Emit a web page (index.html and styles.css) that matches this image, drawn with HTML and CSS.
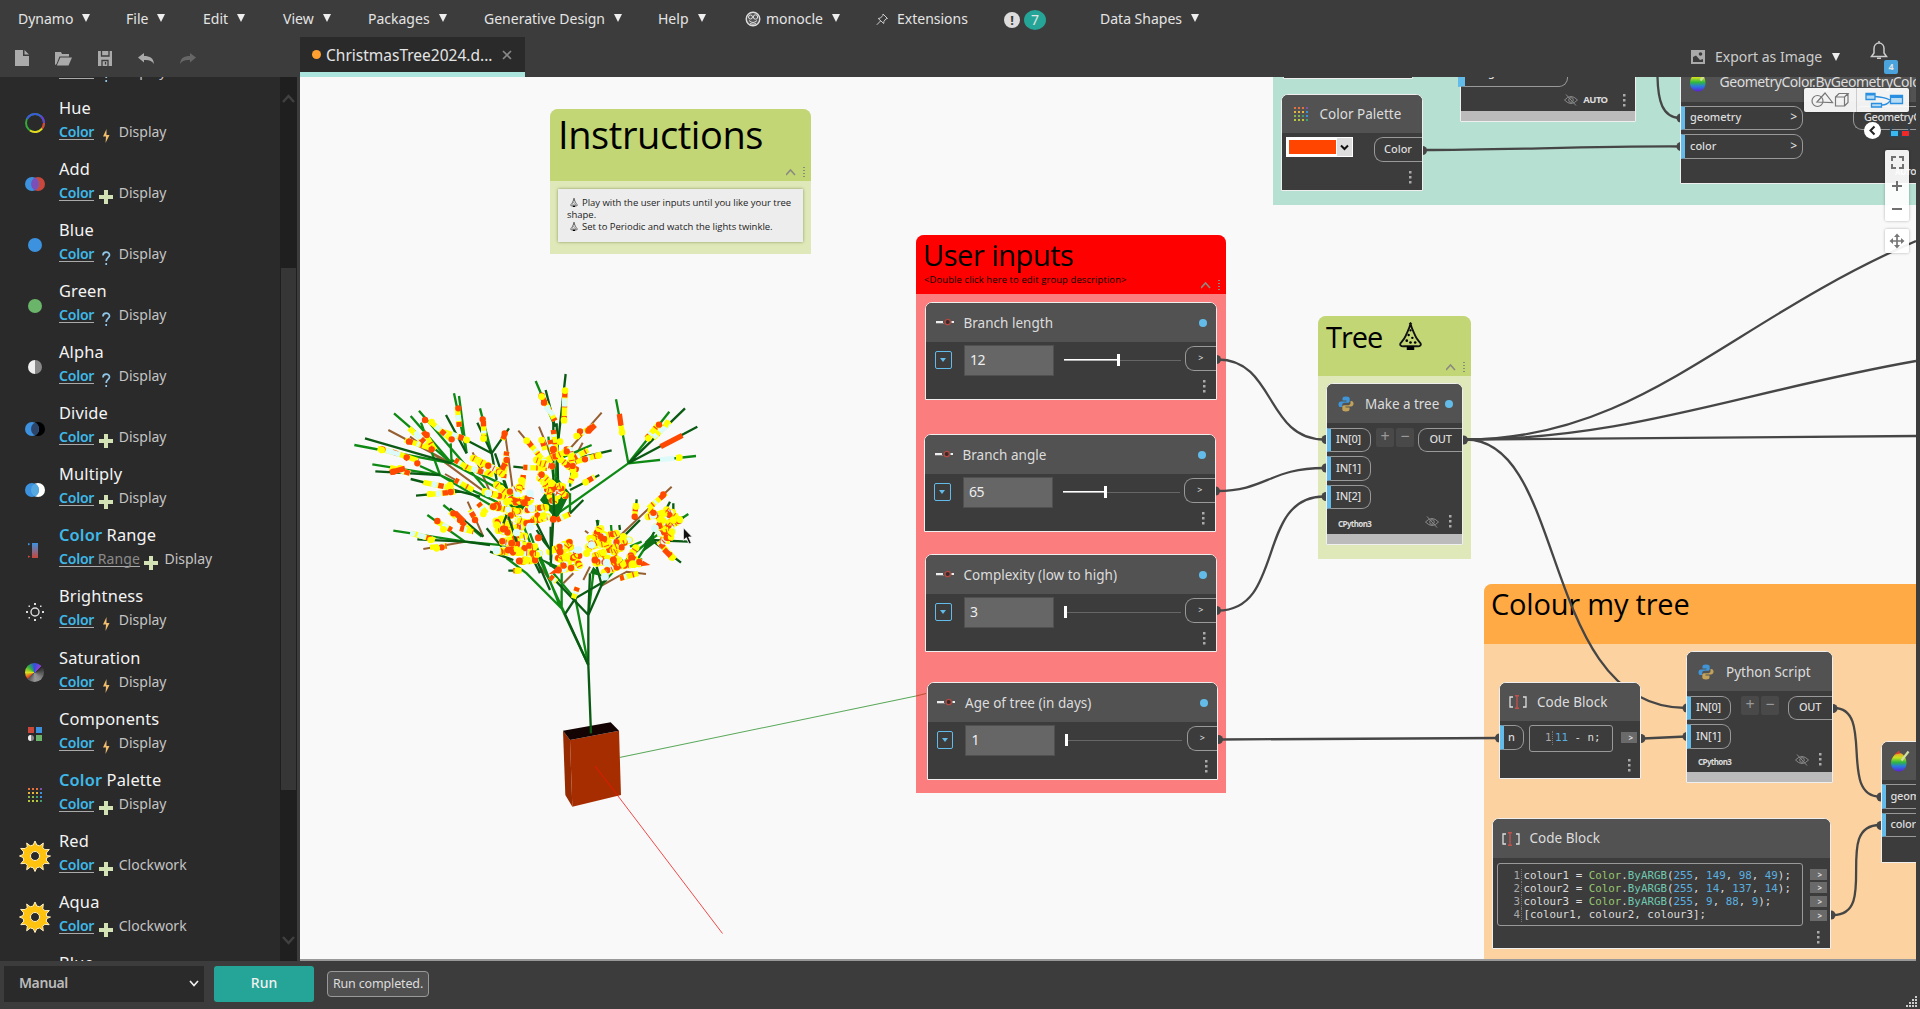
FILE: index.html
```html
<!DOCTYPE html>
<html lang="en">
<head>
<meta charset="utf-8">
<title>Dynamo</title>
<link rel="stylesheet" href="styles.css">
</head>
<body>
<svg class="defs" aria-hidden="true">
  <defs>
    <linearGradient id="rainbow" x1="0" y1="0" x2="0" y2="1"><stop offset="0" stop-color="#f0a020"/><stop offset=".25" stop-color="#c8e020"/><stop offset=".5" stop-color="#30b840"/><stop offset=".72" stop-color="#2878e0"/><stop offset="1" stop-color="#6020d0"/></linearGradient>
    <linearGradient id="range" x1="0" y1="0" x2="0" y2="1"><stop offset="0" stop-color="#3d92e0"/><stop offset="1" stop-color="#c8463a"/></linearGradient>
  </defs>
  <symbol id="plus" viewBox="0 0 14 14"><path d="M5 0h4v5h5v4h-5v5h-4v-5h-5v-4h5z" fill="#d3e2b4"/></symbol>
  <symbol id="query" viewBox="0 0 14 14"><path d="M4 4.500c0-4.500 6.500-4.200 6.500-.5 0 2.500-3.300 2.500-3.300 6M7.200 12v2" fill="none" stroke="#8fc6e8" stroke-width="1.700"/></symbol>
  <symbol id="bolt" viewBox="0 0 14 14"><path d="M7.500 0L4 7.500h3L6.500 14 10.500 6H7.500z" fill="#f2bd6c"/></symbol>
  <symbol id="gear" viewBox="0 0 32 32"><g fill="#ffc20e" stroke="#fff3c8" stroke-width="1"><path d="M14.200 5 16 1l1.800 4 3 .8L24.300 3l-.5 4.500 2 2.200 4.500-.2-3 3.500.6 2.600L31.500 16l-3.600 1.500-.7 2.600 3 3.600-4.500-.4-2 2.200.6 4.300-3.600-2.800-3 .8L16 31.500l-1.700-3.700-3-.8L7.700 29.800l.6-4.300-2-2.200-4.500.4 3-3.600-.7-2.600L.5 16l3.600-1.500.6-2.600-3-3.500 4.500.2 2-2.200L7.700 3l3.500 2.800z"/></g><circle cx="16" cy="16" r="4.500" fill="#2a2a2a" stroke="#fff3c8"/></symbol>
  <symbol id="dots" viewBox="0 0 3 13"><path d="M0 0h2.500v2.500h-2.500zM0 5h2.500v2.500h-2.500zM0 10h2.500v2.500h-2.500z" fill="#aaa"/></symbol>
  <symbol id="grip" viewBox="0 0 14 12"><path d="M1 9l4.500-5L10 9" transform="translate(-1 0)" fill="none" stroke="#8b8b80" stroke-width="1.600"/></symbol>
  <symbol id="slide" viewBox="0 0 18 8"><path d="M0 4h7M15.500 4H18" stroke="#eee" stroke-width="1.800"/><path d="M0 5.500h8" stroke="#999" stroke-width=".6"/><circle cx="11.700" cy="4" r="2.700" fill="#3a2a2a" stroke="#b04a42" stroke-width="1.300"/></symbol>
  <symbol id="eye" viewBox="0 0 14 12"><path d="M.5 6Q7-1 13.500 6 7 13 .5 6zM2 .5l10 11" fill="none" stroke="#8a8a8a" stroke-width="1"/><circle cx="7" cy="6" r="2.300" fill="none" stroke="#8a8a8a"/></symbol>
  <symbol id="py" viewBox="0 0 16 16"><path d="M8 .5c-2.600 0-3.500.8-3.500 2v2h4v1H3C1.300 5.500.5 6.800.5 8.400s.8 2.700 2.300 2.700h1.400V9c0-1.300 1-2.200 2.200-2.200H10c1 0 1.700-.8 1.700-1.800V2.500C11.700 1.200 10.500.5 8 .5z" fill="#3f95d8"/><path d="M8 15.500c2.600 0 3.500-.8 3.500-2v-2h-4v-1H13c1.700 0 2.500-1.300 2.500-2.900S14.700 4.900 13.200 4.900h-.7V7c0 1.300-1 2.200-2.200 2.200H6c-1 0-1.700.8-1.700 1.800v2.500c0 1.300 1.200 2 3.700 2z" fill="#c2a25a"/></symbol>
  <symbol id="cb" viewBox="0 0 18 14"><path d="M4 2H1v10h3M14 2h3v10h-3" fill="none" stroke="#ddd" stroke-width="1.300"/><path d="M6 .7h4M8 .7v12.600M6 13.300h4" fill="none" stroke="#c0504a" stroke-width="1.400"/></symbol>
  <symbol id="egg" viewBox="0 0 20 22"><path d="M9 3c4 0 7.500 5 7.500 10S13 21.500 9 21.500 1 18 1 13 5 3 9 3z" fill="url(#rainbow)"/><path d="M4.500 4.500L9 .5l1 3z" fill="#d84030"/><path d="M18.500 1.500l-7 9" stroke="#cfe0a0" stroke-width="2.200"/></symbol>
  <symbol id="grid" viewBox="0 0 14 14"><g fill="none" stroke-width="2" stroke-dasharray="2 2"><path d="M0 1h14" stroke="#e8703a"/><path d="M0 5h14" stroke="#e8b43a"/><path d="M0 9h14" stroke="#86b84a"/><path d="M0 13h14" stroke="#b8c83a"/></g><path d="M12 0h2v2h-2z" fill="#8050b0"/><path d="M12 4h2v2h-2zM12 8h2v2h-2z" fill="#3d92e0"/><path d="M12 12h2v2h-2zM8 8h2v2h-2z" fill="#3ca070"/></symbol>
  <symbol id="xmas" viewBox="0 0 24 30"><path d="M12 1.500C11 7 8.500 11 7 14.500 5.500 18 3 20.500 1.500 22.500 0 25 2 26.500 5 26h14c3 .5 5-1 3.500-3.500C21 20.500 18.500 18 17 14.500 15.500 11 13 7 12 1.500z" fill="none" stroke="#111" stroke-width="2"/><path d="M8 26h8v4h-8z"/><g><circle cx="12" cy="9" r="1.200"/><circle cx="10" cy="14" r="1.300"/><circle cx="14" cy="17" r="1.300"/><circle cx="8" cy="20" r="1.400"/><circle cx="12" cy="22" r="1.400"/><circle cx="17" cy="22" r="1.400"/></g><path d="M10 2h4L12 0z"/></symbol>
</svg>

<div class="app">
  <nav class="menu">
    <span class="m m-dynamo">Dynamo<i class="tri"></i></span>
    <span class="m m-file">File<i class="tri"></i></span>
    <span class="m m-edit">Edit<i class="tri"></i></span>
    <span class="m m-view">View<i class="tri"></i></span>
    <span class="m m-packages">Packages<i class="tri"></i></span>
    <span class="m m-gen">Generative Design<i class="tri"></i></span>
    <span class="m m-help">Help<i class="tri"></i></span>
    <span class="m m-monocle"><svg width="16" height="16" viewBox="0 0 16 16"><circle cx="8" cy="8" r="6.800" fill="#555" stroke="#ddd" stroke-width="1.400"/><circle cx="5.500" cy="6" r="2" fill="none" stroke="#ddd"/><circle cx="10.500" cy="6" r="2.200" fill="none" stroke="#ddd"/><path d="M4 9.500q4 4 8 0M5 12.500q3 1.500 6 0" fill="none" stroke="#ddd"/></svg>monocle<i class="tri"></i></span>
    <span class="m m-ext"><svg width="12" height="14" viewBox="0 0 12 14"><path d="M7 2l4.500 4.500-1.500.3-2 2.500-.3 2.200L2.200 6.500l2.300-.5L6.800 3.500zM4.500 9L.8 12.800" fill="none" stroke="#ccc" stroke-width="1"/></svg>Extensions</span>
    <span class="m m-alert"><b class="bang">!</b><b class="count">7</b></span>
    <span class="m m-data">Data Shapes<i class="tri"></i></span>
  </nav>

  <div class="toolbar">
    <div class="tools">
      <svg width="14" height="16" viewBox="0 0 14 16"><path d="M0 0h8v6h6v10H0zM9.500 0L14 4.500H9.500z" fill="#aaa"/></svg>
      <svg width="17" height="15" viewBox="0 0 17 15"><path d="M0 1h6l1 2h7v2.500H4.500L1.500 13 0 14zM5.300 6.500H17L13.500 14.500H1.800z" fill="#aaa"/></svg>
      <svg width="14" height="15" viewBox="0 0 14 15"><path d="M0 0h14v15H0z" fill="#aaa"/><path d="M3.500 0v5h7.500V0M4 15V9.500h6V15M7.500 11v2.500" fill="none" stroke="#3c3c3c" stroke-width="1.300"/></svg>
      <svg width="16" height="11" viewBox="0 0 16 11"><path d="M0 4.500L6 0v3c6 0 9.500 2 10 8-2-3.500-5-4.300-10-4V9.500z" fill="#aaa"/></svg>
      <svg width="16" height="11" viewBox="0 0 16 11"><path d="M16 4.500L10 0v3C4 3 .5 5 0 11c2-3.500 5-4.300 10-4v2.500z" fill="#666"/></svg>
    </div>
    <div class="tab"><i class="dirty"></i><span>ChristmasTree2024.d...</span><svg width="10" height="10" viewBox="0 0 10 10"><path d="M1 1l8 8M9 1L1 9" stroke="#888" stroke-width="1.600"/></svg></div>
    <div class="export"><svg width="14" height="14" viewBox="0 0 14 14"><path d="M0 0h14v14H0z" fill="#aaa"/><path d="M2 12V7l3-1.500L9 10l3-1v3z" fill="#3c3c3c"/><circle cx="9.500" cy="4" r="1.800" fill="#3c3c3c"/></svg><span>Export as Image</span><i class="tri"></i></div>
    <div class="bell"><svg width="18" height="20" viewBox="0 0 18 20"><path d="M9 1v2M1.500 16.500h15L14 13V8.500C14 5.500 12 3 9 3S4 5.500 4 8.500V13z" fill="none" stroke="#ccc" stroke-width="1.500"/><path d="M7 17.500h4v1.500H7z" fill="#ccc"/></svg><b>4</b></div>
  </div>

  <div class="middle">
    <aside class="side">
      <ul class="list">
        <li><span class="ic"></span><div><h4>Red</h4><p><a>Color</a><svg><use href="#query"/></svg>Display</p></div></li>
        <li><span class="ic"><svg width="22" height="22" viewBox="0 0 22 22"><circle cx="11" cy="11" r="9" fill="none" stroke="#35a83a" stroke-width="2"/><path d="M3 7A9 9 0 0 1 17 4.300" fill="none" stroke="#3a5ae0" stroke-width="2"/><path d="M17 4.300A9 9 0 0 1 20 11" fill="none" stroke="#6a3ae0" stroke-width="2"/><path d="M20 11a9 9 0 0 1-2 5.700" fill="none" stroke="#e84030" stroke-width="2"/><path d="M18 16.700A9 9 0 0 1 6 18.500" fill="none" stroke="#e8d820" stroke-width="2"/></svg></span><div><h4>Hue</h4><p><a>Color</a><svg><use href="#bolt"/></svg>Display</p></div></li>
        <li><span class="ic"><svg width="20" height="14" viewBox="0 0 20 14"><circle cx="13" cy="7" r="7" fill="#c8483c"/><circle cx="7" cy="7" r="7" fill="#3d92e0"/><path d="M10 .7a7 7 0 0 1 0 12.600A7 7 0 0 1 10 .7z" fill="#7a50b8"/></svg></span><div><h4>Add</h4><p><a>Color</a><svg><use href="#plus"/></svg>Display</p></div></li>
        <li><span class="ic"><i class="disc blue"></i></span><div><h4>Blue</h4><p><a>Color</a><svg><use href="#query"/></svg>Display</p></div></li>
        <li><span class="ic"><i class="disc green"></i></span><div><h4>Green</h4><p><a>Color</a><svg><use href="#query"/></svg>Display</p></div></li>
        <li><span class="ic"><i class="disc alpha"></i></span><div><h4>Alpha</h4><p><a>Color</a><svg><use href="#query"/></svg>Display</p></div></li>
        <li><span class="ic"><svg width="20" height="14" viewBox="0 0 20 14"><circle cx="13" cy="7" r="7"/><circle cx="7" cy="7" r="7" fill="#3d92e0"/><path d="M10 .7a7 7 0 0 1 0 12.600A7 7 0 0 1 10 .7z" fill="#2c4468"/></svg></span><div><h4>Divide</h4><p><a>Color</a><svg><use href="#plus"/></svg>Display</p></div></li>
        <li><span class="ic"><svg width="20" height="14" viewBox="0 0 20 14"><circle cx="13" cy="7" r="7" fill="#fff"/><circle cx="7" cy="7" r="7" fill="#3d92e0"/><path d="M10 .7a7 7 0 0 1 0 12.600A7 7 0 0 1 10 .7z" fill="#55a8e0"/></svg></span><div><h4>Multiply</h4><p><a>Color</a><svg><use href="#plus"/></svg>Display</p></div></li>
        <li><span class="ic"><svg width="14" height="16" viewBox="0 0 14 16"><path d="M4 0h6v15H4z" fill="url(#range)"/><path d="M0 0l2.500 1L0 2.500z" fill="#3d92e0"/><path d="M0 12.500l2.500 1L0 15z" fill="#c8463a"/></svg></span><div><h4><b>Color</b> Range</h4><p><a>Color <s>Range</s></a><svg><use href="#plus"/></svg>Display</p></div></li>
        <li><span class="ic"><svg width="18" height="18" viewBox="0 0 18 18"><circle cx="9" cy="9" r="4" fill="none" stroke="#ddd" stroke-width="1.400"/><g fill="#ddd"><path d="M8 0h2v2H8zM8 16h2v2H8zM0 8h2v2H0zM16 8h2v2h-2zM2.500 2.500H4V4H2.500zM14 2.500h1.500V4H14zM2.500 14H4v1.500H2.500zM14 14h1.500v1.500H14z"/></g></svg></span><div><h4>Brightness</h4><p><a>Color</a><svg><use href="#bolt"/></svg>Display</p></div></li>
        <li><span class="ic"><i class="sat"></i></span><div><h4>Saturation</h4><p><a>Color</a><svg><use href="#bolt"/></svg>Display</p></div></li>
        <li><span class="ic"><svg width="14" height="14" viewBox="0 0 14 14"><path d="M0 0h6v6H0z" fill="#c8463a"/><path d="M8 0h6v6H8z" fill="#3d92e0"/><path d="M8 8h6v6H8z" fill="#6ab56a"/><circle cx="3" cy="11" r="3" fill="#888"/><path d="M3 8a3 3 0 0 0 0 6z" fill="#eee"/></svg></span><div><h4>Components</h4><p><a>Color</a><svg><use href="#bolt"/></svg>Display</p></div></li>
        <li><span class="ic"><svg width="14" height="14"><use href="#grid"/></svg></span><div><h4><b>Color</b> Palette</h4><p><a>Color</a><svg><use href="#plus"/></svg>Display</p></div></li>
        <li><span class="ic"><svg width="32" height="32"><use href="#gear"/></svg></span><div><h4>Red</h4><p><a>Color</a><svg><use href="#plus"/></svg>Clockwork</p></div></li>
        <li><span class="ic"><svg width="32" height="32"><use href="#gear"/></svg></span><div><h4>Aqua</h4><p><a>Color</a><svg><use href="#plus"/></svg>Clockwork</p></div></li>
        <li><span class="ic"></span><div><h4>Blue</h4></div></li>
      </ul>
      <div class="scroll">
        <svg width="13" height="9" viewBox="0 0 13 9"><path d="M1 8l5.500-6L12 8" fill="none" stroke="#404040" stroke-width="2.500"/></svg>
        <i></i>
        <svg width="13" height="9" viewBox="0 0 13 9"><path d="M1 1l5.500 6L12 1" fill="none" stroke="#404040" stroke-width="2.500"/></svg>
      </div>
    </aside>

    <main class="canvas">
      <div class="world">
        <!-- groups -->
        <section class="group g-instr"><header><h2>Instructions</h2><span class="grip"><svg><use href="#grip"/></svg><i></i></span></header>
          <div class="note"><p><svg><use href="#xmas"/></svg>Play with the user inputs until you like your tree shape.</p><p><svg><use href="#xmas"/></svg>Set to Periodic and watch the lights twinkle.</p></div>
        </section>
        <section class="group g-user"><header><h2>User inputs</h2><small>&lt;Double click here to edit group description&gt;</small><span class="grip"><svg><use href="#grip"/></svg><i></i></span></header></section>
        <section class="group g-tree"><header><h2>Tree <svg><use href="#xmas"/></svg></h2><span class="grip"><svg><use href="#grip"/></svg><i></i></span></header></section>
        <section class="group g-colour"><header><h2>Colour my tree</h2></header></section>
        <section class="group g-teal"></section>

        <svg class="scene" width="1920" height="1009" viewBox="0 0 1920 1009">
          <path d="M619.500 757.500L916 696" stroke="#5aa85a" stroke-width="1.100"/><path d="M916 696l10-2.500" stroke="#b85030"/>
          <g transform="translate(340 360) scale(.33333)" fill="none">
            <path d="M669 1112L690 1140 697 1340 676 1305z" fill="#962a00"/>
            <path d="M690 1140L837 1112 843 1305 697 1340z" fill="#a62d00"/>
            <path d="M669 1112L812 1087 837 1112 690 1140z" fill="#140303"/>
            <g stroke="#955f31" stroke-width="6">
              <path d="M335 310L145 210M440 400L210 230M450 395L398 277M520 400L495 220M630 280L597 200M600 290L535 212M660 300L785 158M700 300L728 248M430 530L383 425M375 545L250 567M400 390L315 342M800 565L995 380M785 677L860 635 918 642M670 670L700 640M730 660L750 620M635 560L640 440M600 620L630 660M745 520L735 512"/>
            </g>
            <g stroke="#0e8a14" stroke-width="7">
              <path d="M745 915L706 715M745 915L665 745 560 640 500 595M675 762L600 600M665 740L665 590M660 740L590 560M785 675L850 600M640 470L865 310 828 118M865 310L1068 288M865 310L988 155M645 200L587 63M640 470L655 220M335 310L162 160M335 310L43 255M335 310L212 168M460 440L300 345 97 313M300 345L243 188M440 390L237 152M380 280L342 100M380 280L357 108M455 280L420 145M500 400L335 310M335 310L332 250M500 557L375 545 160 512M375 545L262 465M425 530L310 435M650 300L755 255M690 380L700 290M640 350L625 230M575 560L540 470M930 540L800 650M930 540L885 610M930 540L1045 462M700 710L640 640M600 600L570 520M690 400L690 460M745 765L760 640M500 380L335 300M240 318L300 345 500 440M770 520L775 480M815 520L813 495M870 560L905 545M895 610L905 595"/>
            </g>
            <g stroke="#0a5a14" stroke-width="7">
              <path d="M753 1120L745 915 745 765 750 640M745 915L675 762 706 715 800 660M745 765L640 655M745 765L785 675 770 620M632 620L640 470M865 310L1035 145M865 310L1072 200M655 240L677 42M645 200L617 90M335 310L75 235M300 345L106 334M420 410L212 357M360 395L228 407M380 280L318 165M455 280L412 188M455 280L507 205M455 280L340 220M470 360L455 280M520 440L465 280M690 300L815 271M690 390L778 345M640 470L640 180M570 325L520 320M690 460L730 420M625 560L580 470M600 640L540 520M485 560L440 505M450 555L375 545 232 538M430 530L330 445M935 540L1023 608M930 540L990 425M930 540L1045 545M885 480L890 418M545 632L505 632M530 470L490 360M640 440L600 340M520 600L450 575M630 690L590 600M900 480L850 530M775 500L770 480M840 510L838 495M1000 450L1000 430M1020 490L1028 470M655 400L650 190"/>
            </g>
            <path d="M590 590L660 640 720 610 660 620zM915 545L940 520 945 550 910 575zM750 640L790 650 760 620zM490 380L520 470 560 440zM600 420L650 480 690 400 650 350z" fill="#0c7016"/>

            <!-- lights on the open branch tips -->
            <g stroke-width="16">
              <g stroke="#ffff00"><path id="s1" d="M113 265L160 277 235 302M150 322L210 340M250 367L340 385M262 404L345 396M207 205L275 265M268 182L335 240M312 215L385 240M352 140L358 200M215 520L285 540M285 482L335 510M330 455L390 510M270 562L320 558M370 320L460 345M410 300L440 330"/><path id="s2" d="M603 105L645 182M675 88L672 190M990 185L940 235M765 195L705 232M430 175L432 245M497 215L488 240M195 240L275 265M560 240L605 295M605 235L615 270M785 283L690 310M765 350L730 370M888 430L884 470M978 400L925 445M955 545L1005 598M390 450L410 485"/><path id="s3" d="M250 215L285 270M640 210L650 290M700 295L745 270M710 320L690 370M400 290L450 340M500 275L490 360M550 322L620 325M345 300L395 330M630 240L640 290M550 345L545 390M345 360L400 390M360 505L400 515M415 430L440 460M650 480L690 462M630 650L650 665M712 682L700 715M520 632L545 632M840 655L895 640M960 540L990 545M920 235L958 190"/></g>
              <g stroke="#ddfafa" stroke-dasharray="0 25 18 14 8 34"><use href="#s1"/><use href="#s2" stroke-dashoffset="20"/><use href="#s3" stroke-dashoffset="44"/></g>
              <g stroke="#ff4800"><use href="#s1" stroke-dasharray="0 46 16 18"/><use href="#s2" stroke-dasharray="0 8 16 26 4 18"/><use href="#s3" stroke-dasharray="12 27 4 24"/></g>
            </g>
            <!-- round beads at the ends of each light string -->
            <path d="M127 268h.1M255 180h.1M207 245h.1M355 145h.1M428 178h.1M494 220h.1M605 107h.1M612 128h.1M232 310h.1M340 460h.1M292 483h.1M275 268h.1M720 214h.1M745 212h.1M735 298h.1M707 328h.1M957 194h.1M970 403h.1M884 470h.1M360 480h.1M405 480h.1M160 335h.1M200 292h.1M335 238h.1M500 300h.1M680 268h.1M640 270h.1M332 396h.1M305 562h.1M260 225h.1" stroke="#ff4800" stroke-width="19" stroke-linecap="round"/>
            <path d="M270 402h.1M605 110h.1M125 270h.1M675 92h.1M672 180h.1M846 217h.1M925 235h.1M1018 293h.1M775 287h.1M737 367h.1M605 240h.1M430 235h.1M275 186h.1M290 565h.1M330 375h.1M888 440h.1M705 345h.1M533 632h.1M660 245h.1M380 240h.1M560 242h.1M180 325h.1M272 540h.1M310 508h.1M430 462h.1M995 592h.1M710 228h.1" stroke="#ffff00" stroke-width="20" stroke-linecap="round"/>
            <path d="M838 162L843 197M1027 226L962 260M765 195L745 215M972 568L992 588M195 325L150 338M372 485L345 458M495 310L480 340M195 290L205 297" stroke="#ff4800" stroke-width="16"/>
            <path d="M843 197L848 225" stroke="#ffff00" stroke-width="16"/>
            <path d="M960 299L1003 295M225 215L245 235M615 140L640 165M674 115L673 140M210 520L240 525M940 232L990 190M150 275L180 284" stroke="#ddfafa" stroke-width="15"/>
            <path d="M1008 294L1025 292M985 182L975 200M958 215L950 223M232 524L226 522" stroke="#ffff00" stroke-width="16"/>

            <!-- lights in the dense crown -->
            <g stroke-width="22" stroke-linecap="round">
              <g stroke="#ffff00" stroke-dasharray="0 16"><path id="c1" d="M435 395L520 420 455 440 540 455 465 485 550 500 470 510 560 530 480 545 590 560 470 575 600 580 540 605 590 600"/><path id="c2" d="M470 375L500 400 540 380 520 430 575 410 560 450 620 440 580 480 625 470 560 490 535 480M600 355L650 400 610 390 670 375 640 430 600 340 680 410M590 300L640 320 600 310 690 270 700 330 640 280M400 295L450 320 470 330 490 345"/><path id="c3" d="M630 575L690 545 650 600 715 580 655 630 720 620 690 560 725 595M750 535L830 520 745 560 870 540 760 590 850 560 765 610 840 600 790 640 880 600 830 620 905 610 870 590 890 560M740 580L780 500 800 560 840 610"/><path id="c4" d="M925 470L1000 455 950 500 1010 480 960 520 1000 510 970 545 995 530M980 450L1020 480 990 500 930 450"/></g>
            </g>
            <g stroke-width="19" stroke-linecap="round">
              <g stroke="#ddfafa" stroke-dasharray="0 43"><use href="#c1" stroke-dashoffset="8"/><use href="#c2" stroke-dashoffset="21"/><use href="#c3" stroke-dashoffset="3"/><use href="#c4" stroke-dashoffset="30"/></g>
              <g stroke="#ff4800" stroke-dasharray="0 59 0 37"><use href="#c1" stroke-dashoffset="15"/><use href="#c2" stroke-dashoffset="9"/><use href="#c3" stroke-dashoffset="27"/><use href="#c4" stroke-dashoffset="4"/></g>
              <g stroke="#ffff00" stroke-dasharray="0 67"><use href="#c1" stroke-dashoffset="35"/><use href="#c2" stroke-dashoffset="44"/><use href="#c3" stroke-dashoffset="52"/><use href="#c4" stroke-dashoffset="17"/></g>
            </g>
            <g stroke="#ff4800" stroke-width="17" stroke-dasharray="3 23 3 37"><use href="#c1" stroke-dashoffset="5"/><use href="#c2"/><use href="#c3" stroke-dashoffset="9"/><use href="#c4"/></g>
            <path d="M590 510L612 545 632 570M500 465L490 490M640 400L643 470M530 545L505 470M632 500L632 600" stroke="#0a5a14" stroke-width="7"/>
            <path d="M553 428h.1M460 440h.1M640 478h.1M505 570h.1M595 533h.1M660 575h.1M655 630h.1M765 600h.1M490 507h.1M538 603h.1M515 550h.1M640 268h.1M820 600h.1M875 593h.1" stroke="#ff4800" stroke-width="21" stroke-linecap="round"/>
            <path d="M470 495h.1M790 578h.1M545 362h.1M560 600h.1M635 370h.1M610 468h.1M680 590h.1M850 530h.1M500 425h.1M1000 480h.1M965 460h.1M878 612h.1" stroke="#ffff00" stroke-width="22" stroke-linecap="round"/>
            <path d="M445 400h.1M575 445h.1M470 572h.1M795 650h.1M755 555h.1M945 505h.1M570 500h.1M715 570h.1M800 608h.1M570 400h.1M530 518h.1" stroke="#ddfafa" stroke-width="23" stroke-linecap="round"/>
            <path d="M1030 503v38l9-8 8 19 7-3-8-18h11z" fill="#111" stroke="#fff" stroke-width="2.500"/>
          </g>
          <path d="M595 766L618 796" stroke="#e81800" stroke-width="1"/><path d="M618 796L722.500 933.500" stroke="#f04a4a" stroke-width="1"/>

          <!-- wires -->
          <g fill="none" stroke="#464646" stroke-width="2.300">
            <path d="M1218 359.500C1275 359.500 1266 439.500 1324 439.500"/>
            <path d="M1217 491C1266 491 1270 468 1324 468"/>
            <path d="M1218 610.500C1285 610.500 1256 496.500 1324 496.500"/>
            <path d="M1220 739.500L1499 738"/>
            <path d="M1466 439.500C1640 439 1728 322 1916 241"/>
            <path d="M1466 439.500C1630 439 1740 392 1916 361"/>
            <path d="M1466 439.500L1916 436"/>
            <path d="M1466 439.500C1568 440 1540 708 1686 708"/>
            <path d="M1834 708C1875 708 1838 796.500 1880 796.500"/>
            <path d="M1833 915C1880 915 1832 825 1880 825"/>
            <path d="M1643 738.500L1686 736.500"/>
            <path d="M1424 150C1500 150 1600 146 1680 146.500"/>
            <path d="M1657.500 77C1658 100 1662 117.500 1680 118"/>
          </g>
          <g fill="#464646">
            <circle cx="1216.500" cy="359.500" r="4.500"/><circle cx="1215.500" cy="491" r="4.500"/><circle cx="1216.500" cy="610.500" r="4.500"/><circle cx="1218.500" cy="739.500" r="4.500"/>
            <circle cx="1326" cy="439.500" r="4.500"/><circle cx="1326" cy="468" r="4.500"/><circle cx="1326" cy="496.500" r="4.500"/><circle cx="1463.500" cy="440" r="4.500"/>
            <circle cx="1499.500" cy="738" r="4.500"/><circle cx="1641" cy="738.500" r="4.500"/><circle cx="1687" cy="708" r="4.500"/><circle cx="1687" cy="736.500" r="4.500"/><circle cx="1833" cy="708.500" r="4.500"/>
            <circle cx="1831" cy="915" r="4.500"/><circle cx="1881" cy="797" r="4.500"/><circle cx="1881" cy="825.500" r="4.500"/><circle cx="1422.500" cy="150.500" r="4.500"/><circle cx="1681" cy="118" r="4.500"/><circle cx="1681" cy="146.500" r="4.500"/>
          </g>
        </svg>

        <!-- number sliders -->
        <article class="node slider n-len"><header><svg><use href="#slide"/></svg><h3>Branch length</h3><i class="dot"></i></header><div class="row"><b class="drop"></b><span class="val">12</span><span class="track"><i style="width:48%"></i></span><span class="port out">&gt;</span></div><svg class="dots"><use href="#dots"/></svg></article>
        <article class="node slider n-ang"><header><svg><use href="#slide"/></svg><h3>Branch angle</h3><i class="dot"></i></header><div class="row"><b class="drop"></b><span class="val">65</span><span class="track"><i style="width:38%"></i></span><span class="port out">&gt;</span></div><svg class="dots"><use href="#dots"/></svg></article>
        <article class="node slider n-cpx"><header><svg><use href="#slide"/></svg><h3>Complexity (low to high)</h3><i class="dot"></i></header><div class="row"><b class="drop"></b><span class="val">3</span><span class="track"><i style="width:1%"></i></span><span class="port out">&gt;</span></div><svg class="dots"><use href="#dots"/></svg></article>
        <article class="node slider n-age"><header><svg><use href="#slide"/></svg><h3>Age of tree (in days)</h3><i class="dot"></i></header><div class="row"><b class="drop"></b><span class="val">1</span><span class="track"><i style="width:1%"></i></span><span class="port out">&gt;</span></div><svg class="dots"><use href="#dots"/></svg></article>

        <article class="node python n-make"><header><svg><use href="#py"/></svg><h3>Make a tree</h3><i class="dot"></i></header>
          <div class="row"><div class="ins"><span class="port in">IN[0]</span><span class="port in">IN[1]</span><span class="port in">IN[2]</span></div><span class="pm"><i>+</i><i>−</i></span><span class="port out">OUT</span></div>
          <footer><em>CPython3</em><svg class="eye"><use href="#eye"/></svg><svg class="dots"><use href="#dots"/></svg></footer><div class="bar"></div></article>

        <article class="node python n-script"><header><svg><use href="#py"/></svg><h3>Python Script</h3></header>
          <div class="row"><div class="ins"><span class="port in">IN[0]</span><span class="port in">IN[1]</span></div><span class="pm"><i>+</i><i>−</i></span><span class="port out">OUT</span></div>
          <footer><em>CPython3</em><svg class="eye"><use href="#eye"/></svg><svg class="dots"><use href="#dots"/></svg></footer><div class="bar"></div></article>

        <article class="node n-cb1"><header><svg><use href="#cb"/></svg><h3>Code Block</h3></header>
          <div class="row"><span class="port in">n</span><pre class="code"><span><u>1</u><k>11</k> - n;</span></pre><div class="outs"><b>&gt;</b></div></div><svg class="dots"><use href="#dots"/></svg></article>

        <article class="node n-cb2"><header><svg><use href="#cb"/></svg><h3>Code Block</h3></header>
          <div class="row"><pre class="code"><span><u>1</u>colour1 = <v>Color</v>.<w>ByARGB</w>(<k>255</k>, <k>149</k>, <k>98</k>, <k>49</k>);</span><span><u>2</u>colour2 = <v>Color</v>.<w>ByARGB</w>(<k>255</k>, <k>14</k>, <k>137</k>, <k>14</k>);</span><span><u>3</u>colour3 = <v>Color</v>.<w>ByARGB</w>(<k>255</k>, <k>9</k>, <k>88</k>, <k>9</k>);</span><span><u>4</u>[colour1, colour2, colour3];</span></pre><div class="outs"><b>&gt;</b><b>&gt;</b><b>&gt;</b><b>&gt;</b></div></div><svg class="dots"><use href="#dots"/></svg></article>

        <article class="node n-geo2"><header><svg><use href="#egg"/></svg></header><div class="ins"><span class="port in">geometry</span><span class="port in">color</span></div></article>

        <article class="node n-sliver"></article>
        <article class="node n-pal"><header><svg><use href="#grid"/></svg><h3>Color Palette</h3></header><div class="row"><span class="swatch"><i></i><b><svg width="9" height="7" viewBox="0 0 9 7"><path d="M1 1.500l3.500 3.500L8 1.500" fill="none" stroke="#111" stroke-width="2"/></svg></b></span><span class="port out">Color</span></div><svg class="dots"><use href="#dots"/></svg></article>
        <article class="node n-auto"><span class="port in">g</span><footer><svg class="eye"><use href="#eye"/></svg><em>AUTO</em><svg class="dots"><use href="#dots"/></svg></footer><div class="bar"></div></article>
        <article class="node n-geo1"><header><svg><use href="#egg"/></svg><h3>GeometryColor.ByGeometryColor</h3></header><div class="row"><div class="ins"><span class="port in">geometry<q>&gt;</q></span><span class="port in">color<q>&gt;</q></span></div><span class="port out">GeometryColor</span></div><footer><em>AUTO</em></footer></article>

        <!-- view controls -->
        <div class="views"><svg width="105" height="24" viewBox="0 0 105 24"><path d="M52.500 0v24" stroke="#ccc"/><g fill="none" stroke="#777" stroke-width="1.200"><circle cx="13.500" cy="13" r="5.500"/><path d="M13 14L21 5l7.500 9.500zM31.500 9h9v9h-9zM31.500 9l3.500-3.500h9L40.500 9M44 5.500V14.500L40.500 18"/></g><g fill="#b9dcf5" stroke="#2a8fe0" stroke-width="1.300"><path d="M62 5.500h9v6h-9zM67.500 15.500h10v3.500h-10zM86.500 7.500h12v8h-12z"/><path d="M71 8.500Q80 9 86 12M78 17Q83 17 86 13" fill="none"/></g><path d="M62 6.500h9M86.500 9h12" stroke="#2a8fe0" stroke-width="2"/></svg></div>
        <div class="collapse"><svg width="17" height="17" viewBox="0 0 17 17"><path d="M10.500 4.500l-4 4 4 4" fill="none" stroke="#222" stroke-width="2"/></svg></div>
        <div class="glasses"><svg width="22" height="13" viewBox="0 0 22 13"><path d="M1 6l3-5M21 6l-3-5M10 7h3" stroke="#27445a" stroke-width="1.500" fill="none"/><path d="M1.500 5.500h8v6h-8z" fill="#3ab8f0" stroke="#27445a"/><path d="M12.500 5.500h8v6h-8z" fill="#f02828" stroke="#27445a"/></svg></div>
        <div class="zoom"><svg width="24" height="71" viewBox="0 0 24 71"><g fill="none" stroke="#707070" stroke-width="2"><path d="M7 11V7h4M14 7h4v4M18 14v4h-4M11 18H7v-4M7 36h10M12 31v10M7 59h10"/></g></svg></div>
        <div class="pan"><svg width="24" height="24" viewBox="0 0 24 24"><g fill="none" stroke="#777" stroke-width="1.700"><path d="M12 6v12M6 12h12"/></g><path d="M12 4.500l3 3.500H9zM12 19.500l3-3.500H9zM4.500 12L8 9v6zM19.500 12L16 9v6z" fill="#777"/></svg></div>
      </div>
    </main>
  </div>

  <footer class="status">
    <div class="mode">Manual<svg width="10" height="7" viewBox="0 0 10 7"><path d="M1 1l4 4.500L9 1" fill="none" stroke="#eee" stroke-width="1.700"/></svg></div>
    <button>Run</button>
    <span class="msg">Run completed.</span>
    <svg class="resize" width="12" height="12" viewBox="0 0 12 12"><path d="M9 0h2v2H9zM6 3h2v2H6zM9 3h2v2H9zM3 6h2v2H3zM6 6h2v2H6zM9 6h2v2H9zM0 9h2v2H0zM3 9h2v2H3zM6 9h2v2H6zM9 9h2v2H9z" fill="#ccc"/></svg>
  </footer>
</div>
</body>
</html>
```

FILE: styles.css
```css
* { box-sizing: border-box; margin: 0; padding: 0; }
body { font: 14px/20px "Noto Sans", sans-serif; background: #3c3c3c; color: #e4e4e4; overflow: hidden; }
.defs { position: absolute; width: 0; height: 0; }
.app { width: 1920px; height: 1009px; display: flex; flex-direction: column; background: #3c3c3c; border-bottom-left-radius: 8px; overflow: hidden; }
svg { flex: none; display: block; }
i, em { font-style: normal; }

/* menu bar */
.menu { height: 37px; display: flex; align-items: center; padding-left: 18px; }
.m { display: flex; align-items: center; height: 38px; white-space: nowrap; }
.tri { width: 0; height: 0; border: 4.5px solid transparent; border-top: 8px solid #eee; border-bottom: 0; margin: -1px 0 0 9px; flex: none; }
.m-dynamo { width: 108px; } .m-file { width: 77px; } .m-edit { width: 80px; } .m-view { width: 85px; }
.m-packages { width: 116px; } .m-gen { width: 174px; } .m-help { width: 87px; }
.m-monocle { width: 131px; gap: 5px; } .m-monocle .tri { margin-left: 4px; }
.m-ext { width: 128px; gap: 9px; } .m-alert { width: 96px; gap: 4px; padding-top: 2px; }
.bang { width: 16px; height: 16px; border-radius: 50%; background: #ddd; color: #3c3c3c; font-size: 13px; line-height: 16px; text-align: center; }
.count { width: 22px; height: 20px; border-radius: 50%; background: #24a598; font-weight: 400; text-align: center; }

/* tool bar */
.toolbar { height: 40px; display: flex; align-items: flex-start; }
.tools { width: 300px; height: 40px; display: flex; align-items: center; gap: 26px; padding: 2px 0 0 15px; }
.tab { width: 225px; height: 40px; background: #2a2a2a; border-bottom: 5px solid #ace5de; display: flex; align-items: center; padding-left: 12px; font-size: 15.500px; letter-spacing: 0; }
.tab span { width: 176px; margin-left: 5px; }
.dirty { width: 9px; height: 9px; border-radius: 50%; background: #ffa030; }
.export { margin-left: 1166px; width: 170px; height: 40px; display: flex; align-items: center; gap: 10px; color: #ccc; white-space: nowrap; }
.export .tri { margin-left: 0; }
.bell { position: relative; width: 40px; height: 40px; padding: 3px 0 0 9px; }
.bell b { position: absolute; left: 23px; top: 23px; width: 14px; height: 14px; border-radius: 2px; background: #4ba3dd; font-size: 9px; line-height: 14px; text-align: center; }

/* library list */
.middle { height: 884px; display: flex; }
.side { width: 300px; display: flex; background: #2a2a2a; border-right: 3px solid #3c3c3c; overflow: hidden; }
.list { width: 280px; height: 884px; overflow: hidden; list-style: none; }
.list li { height: 61.1px; display: flex; }
.list li:first-child { margin-top: -43px; }
.list div { padding-top: .6px; }
.ic { width: 59px; padding-left: 10px; height: 56px; display: flex; align-items: center; justify-content: center; }
.list h4 { font-size: 16.4px; line-height: 24px; font-weight: 400; color: #f4f4f4; letter-spacing: .15px; }
.list h4 b { color: #3fb8e8; font-weight: 600; }
.list p { display: flex; height: 20px; margin-top: 2px; color: #c4c4c4; }
.list a { color: #3fb8e8; font-weight: 600; height: 18px; border-bottom: 1px solid #aaa; letter-spacing: -.2px; }
.list s { text-decoration: none; font-weight: 400; color: #8a8a8a; letter-spacing: .1px; }
.list p svg { width: 14px; height: 14px; margin: 7px 6px 0 4.500px; }
.disc { width: 14px; height: 14px; border-radius: 50%; }
.blue { background: #3d92e0; } .green { background: #6ab56a; }
.alpha { background: linear-gradient(90deg, #eee 50%, #888 50%); }
.sat { width: 19px; height: 19px; border-radius: 50%; background: conic-gradient(from 45deg, #222, #888 90deg, #999 130deg, #555 180deg, #e03020 182deg, #d8e020 225deg, #30b040 270deg, #3050e0 315deg, #9040d0); }
.scroll { width: 17px; background: #1f1f1f; display: flex; flex-direction: column; align-items: center; padding-top: 17px; }
.scroll i { width: 15px; height: 522px; background: #363636; margin: 165px 0 146px; }

/* graph canvas */
.canvas { position: relative; width: 1616px; height: 884px; background: #f9f9f9; border-bottom: 2px solid #999; overflow: hidden; }
.world { position: absolute; left: -300px; top: -77px; width: 1920px; height: 1009px; }
.scene { position: absolute; left: 0; top: 0; }
.group { position: absolute; border-radius: 8px 8px 0 0; color: #000; overflow: hidden; }
.group header { position: relative; padding-left: 7px; }
.group h2 { font: 400 29px/38px "Open Sans", sans-serif; white-space: nowrap; letter-spacing: -.3px; }
.group small { display: block; font: 9.500px/12px "Open Sans", sans-serif; letter-spacing: .08px; margin: -1px 0 0 1px; }
.grip { position: absolute; right: 6px; bottom: 3px; display: flex; gap: 3px; align-items: center; }
.grip svg { width: 14px; height: 12px; }
.grip i { width: 2px; height: 10px; background: repeating-linear-gradient(#8b8b80 0 1px, transparent 1px 3px); }
.g-instr { left: 550px; top: 109px; width: 261px; height: 145px; background: #dfe8b8; }
.g-instr header { height: 72px; background: #c2d676; padding-left: 8px; }
.g-instr h2 { font-size: 38px; line-height: 50px; letter-spacing: -.42px; }
.note { width: 245px; height: 53px; margin: 8px 0 0 8px; padding: 8px 9px; background: #ededed; box-shadow: 0 0 3px #8a9a60; color: #222; font: 9.500px/12px "Open Sans", sans-serif; letter-spacing: -.03px; }
.note svg { display: inline-block; width: 8px; height: 9px; margin: 0 4px -1px 3px; }
.note p { margin-right: -8px; }
.note p + p { white-space: nowrap; }
.g-user { left: 916px; top: 235px; width: 310px; height: 558px; background: #fc7d7d; }
.g-user header { height: 59px; background: #f00; }
.g-user h2 { line-height: 40px; letter-spacing: -.45px; }
.g-tree { left: 1318px; top: 316px; width: 153px; height: 243px; background: #dfe8b8; }
.g-tree header { height: 60px; background: #c2d676; }
.g-tree h2 { display: flex; gap: 17px; padding-left: 1px; line-height: 41px; letter-spacing: -1px; }
.g-tree h2 svg { width: 23px; height: 28px; margin-top: 6px; }
.g-colour { left: 1484px; top: 584px; width: 440px; height: 380px; background: #fcd3a0; }
.g-colour header { height: 60px; background: #ffaa45; }
.g-colour h2 { line-height: 40px; letter-spacing: -.2px; }
.g-teal { left: 1273px; top: 60px; width: 650px; height: 144.5px; background: #b5e0d2; }

/* nodes */
.node { position: absolute; background: #3c3c3c; border: 1px solid #f0efef; border-radius: 7px 7px 0 0; color: #ddd; display: flex; flex-direction: column; }
.node > header { height: 38.5px; background: #525252; border-radius: 6px 6px 0 0; display: flex; align-items: center; flex: none; }
.node h3 { font-size: 13.500px; font-weight: 400; letter-spacing: .02px; white-space: nowrap; padding-top: 1px; }
.dot { width: 8px; height: 8px; border-radius: 50%; background: #62bbe8; margin: 2px 9px 0 auto; }
.row { display: flex; }
.dots { width: 3px; height: 13px; margin: auto 9.500px 6px auto; }
.port { height: 24.500px; border: 1px solid #999; display: flex; align-items: center; font-size: 11px; font-weight: 500; color: #ddd; white-space: nowrap; line-height: 20px; padding-bottom: 1px; }
.in { border-left: 4px solid #62bbe8; border-radius: 0 9px 9px 0; padding-left: 5px; }
.out { border-right: 0; border-radius: 9px 0 0 9px; justify-content: center; }
.ins { display: flex; flex-direction: column; gap: 4px; }
.bar { height: 10px; background: #bbb; }

.slider { width: 291.5px; height: 97.5px; }
.slider header svg { width: 18px; height: 8px; margin: 0 10px 0 9.500px; }
.slider .row { padding: 4px 0 0 9px; height: 33px; align-items: center; }
.drop { width: 17px; height: 18px; margin-top: -1px; border: 1.500px solid #62bbe8; border-radius: 2px; display: flex; align-items: center; justify-content: center; }
.drop::after { content: ""; border: 3px solid transparent; border-top: 4px solid #62bbe8; border-bottom: 0; }
.val { width: 90px; height: 31px; margin: 0 10px 0 12px; background: #666; border: 1px solid #505050; padding-left: 5px; line-height: 28px; color: #eee; letter-spacing: -.5px; }
.track { width: 117px; height: 12px; margin-right: 4.500px; background: linear-gradient(#666, #666) 0 5.500px / 100% 1px no-repeat; }
.track i { display: block; height: 12px; border-right: 3px solid #fff; background: linear-gradient(#fff, #fff) 0 5px / 100% 1.500px no-repeat; min-width: 3px; }
.slider .out { width: 30.500px; height: 25px; font-size: 9px; margin-top: -3px; }
.n-len { left: 925px; top: 302px; } .n-ang { left: 924px; top: 434px; }
.n-cpx { left: 925px; top: 554px; } .n-age { left: 926.5px; top: 682px; }

.python header svg { width: 16px; height: 16px; margin: 2px 11px 0 11px; }
.python .row { padding-top: 5px; }
.python .in { width: 44px; } .python .out { width: 44px; margin-left: auto; letter-spacing: -.3px; }
.python .in { letter-spacing: -.2px; }
.pm { display: flex; gap: 2px; margin-left: 5px; }
.pm i { width: 18px; height: 19px; border-radius: 2px; background: #494949; color: #999; text-align: center; font-size: 16px; line-height: 17px; }
.node footer { display: flex; align-items: center; margin-top: auto; }
.node footer em { font-size: 8px; font-weight: 700; letter-spacing: -.3px; line-height: 12px; }
.node footer .dots { margin: 0 10px 0 10px; }
.python footer { height: 23px; padding: 0 0 2px 11px; }
.python footer em { letter-spacing: -.6px; padding-top: 4px; }
.eye { width: 14px; height: 12px; margin-left: auto; }
.n-make { left: 1326px; top: 383px; width: 137px; height: 162px; }
.n-make h3 { letter-spacing: -.04px; }
.n-script { left: 1686px; top: 651px; width: 146.5px; height: 132px; }
.n-script h3 { margin-left: 1px; }
.n-script .pm { margin-left: 10px; }

.n-cb1 { left: 1499px; top: 681.5px; width: 142px; height: 97.5px; }
.n-cb1 header svg, .n-cb2 header svg { width: 18px; height: 14px; margin: 1px 10px 0 9px; }
.n-cb1 .row { padding-top: 4px; }
.n-cb1 .in { width: 24px; padding-left: 4px; }
.code { font: 10.830px/13.500px "DejaVu Sans Mono", "Liberation Mono", monospace; border: 1px solid #999; border-radius: 3px; }
.code span { display: block; letter-spacing: 0; }
.code u { display: inline-block; width: 8px; margin-right: 2px; border-right: 1px dotted #777; text-decoration: none; color: #aaa; }
.code k { color: #5ab0e0; } .code v { color: #98c870; } .code w { color: #70c8b0; }
.n-cb1 .code { width: 84px; height: 27px; margin: 0 7.500px 0 5px; padding: 5px 0 0 15px; }
.outs b { display: block; width: 16px; height: 11px; background: #6a6a6a; font-size: 8px; line-height: 11px; padding-left: 8px; }
.n-cb1 .outs { padding-top: 7px; }
.n-cb2 { left: 1491.500px; top: 818px; width: 339px; height: 131px; }
.n-cb2 h3 { padding: 0; }
.n-cb2 .row { padding: 5px 0 0 4px; }
.n-cb2 .code { width: 306px; height: 63px; padding: 5px 0 0 16px; line-height: 13.300px; }
.n-cb2 .outs { margin: 6px 0 0 7px; }
.n-cb2 .outs b { width: 17px; margin-bottom: 2.700px; }
.n-cb2 .dots { margin-bottom: 4px; margin-right: 10px; }

.n-geo2 { left: 1880.500px; top: 740.500px; width: 150px; height: 122px; }
.n-geo2 header svg { width: 20px; height: 22px; margin-left: 8px; }
.n-geo2 .ins { padding-top: 4px; }
.n-geo2 .in { letter-spacing: -.2px; }
.n-sliver { left: 1283px; top: 60px; width: 130px; height: 19px; }
.n-pal { left: 1280.500px; top: 93.5px; width: 142px; height: 97.5px; }
.n-pal header svg { width: 14px; height: 16px; margin: 0 12px; }
.n-pal .row { padding: 4px 0 0 4px; }
.swatch { width: 67px; height: 20px; background: #fff; display: flex; padding: 1px; }
.swatch i { width: 47px; height: 14px; background: #ff4500; margin: 2px 1px 0 2px; }
.swatch b { width: 15px; height: 18px; background: #ddd; display: flex; align-items: center; justify-content: center; }
.n-pal .out { width: 48px; margin-left: auto; }
.n-auto { left: 1460px; top: 40px; width: 176px; height: 82px; }
.n-auto .in { margin: 21px 0 0 -3px; width: 110px; padding-left: 23px; border-left-width: 7px; flex: none; padding-bottom: 5px; }
.n-auto footer { height: 24px; padding-top: 2px; }
.n-auto footer em, .n-geo1 em { font-size: 9.500px; margin-left: 5px; letter-spacing: -.6px; }
.n-auto footer .dots { margin-left: 15px; margin-right: 9.500px; }
.n-auto .eye { margin-right: 0; }
.n-geo1 { left: 1680px; top: 62px; width: 300px; height: 122px; }
.n-geo1 header svg { width: 20px; height: 22px; margin: 0 11px 3px 7.500px; }
.n-geo1 h3 { padding: 0 0 1px; letter-spacing: -.45px; font-size: 14px; }
.n-geo1 .row { padding-top: 4px; }
.n-geo1 .in { width: 122px; justify-content: space-between; padding-right: 5px; }
.n-geo1 q { quotes: none; font-size: 12px; }
.n-geo1 .out { width: 126px; margin-left: auto; padding-left: 10px; justify-content: flex-start; letter-spacing: -.4px; }
.n-geo1 footer { padding: 0 0 5px 209px; }

/* overlay controls */
.views, .zoom, .pan { position: absolute; background: rgba(255, 255, 255, .93); border-radius: 2px; box-shadow: 0 0 3px rgba(0, 0, 0, .3); }
.views { left: 1804px; top: 88px; width: 105px; height: 24px; }
.collapse { position: absolute; left: 1864px; top: 121.5px; width: 17px; height: 17px; border-radius: 50%; background: #fff; }
.glasses { position: absolute; left: 1889px; top: 125px; }
.zoom { left: 1885px; top: 150px; width: 24px; height: 71px; }
.pan { left: 1885px; top: 229px; width: 24px; height: 24px; }

/* status bar */
.status { position: relative; height: 48px; display: flex; align-items: center; padding: 0 0 2px 4px; }
.mode { width: 200px; height: 36px; background: #2a2a2a; display: flex; align-items: center; justify-content: space-between; padding: 0 5px 2px 15px; font-weight: 600; color: #bbb; letter-spacing: -.4px; }
.status button { width: 100px; height: 36px; margin: 0 13px 0 10px; border: 0; border-radius: 3px; background: #24a598; color: #f0f0f0; font: 500 14px/20px "Noto Sans", sans-serif; padding-bottom: 2px; }
.msg { width: 102px; height: 26px; border: 1.500px solid #999; border-radius: 4px; background: #505050; font-size: 12.500px; line-height: 23px; text-align: center; letter-spacing: -.15px; white-space: nowrap; color: #ddd; }
.resize { position: absolute; right: 2px; bottom: 1px; }
```
